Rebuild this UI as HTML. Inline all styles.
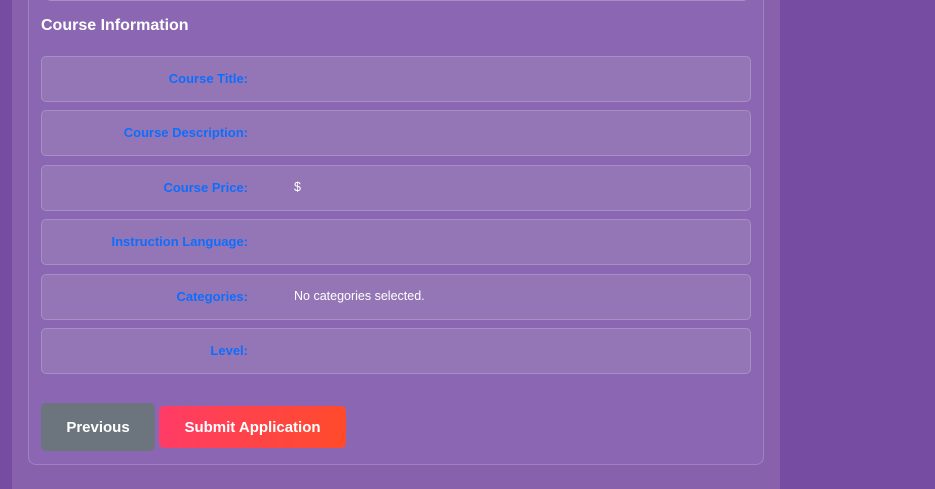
<!DOCTYPE html>
<html><head><style>
*{box-sizing:border-box;margin:0;padding:0}
html,body{width:935px;height:489px;overflow:hidden;background:#764ca2;font-family:"Liberation Sans",sans-serif}
.outer{position:absolute;left:12px;top:0;width:768px;height:489px;background:#8861ac}
.card{position:absolute;left:28px;top:-20px;width:736px;height:485px;background:#8b66b2;border:1px solid rgba(255,255,255,0.18);border-radius:8px}
.topbox{position:absolute;left:45px;top:-40px;width:704px;height:41px;border:1px solid rgba(255,255,255,0.2);border-radius:6px;background:#9274b6}
h3{position:absolute;left:41px;top:17px;color:#fff;font-size:16px;font-weight:bold}
.row{position:absolute;left:41px;width:710px;height:46px;background:#9476b6;border:1px solid rgba(255,255,255,0.18);border-radius:5px;font-size:13px}
.row .l{position:absolute;right:502px;top:14px;color:#0d6efd;font-weight:bold}
.row .v{position:absolute;left:252px;top:14px;color:#fff;font-size:12.5px}
.btn{position:absolute;color:#fff;font-weight:bold;font-size:15px;display:flex;align-items:center;justify-content:center;border-radius:5px}
</style></head><body>
<div class="outer"></div>
<div class="card"></div>
<div class="topbox"></div>
<h3>Course Information</h3>
<div class="row" style="top:56px"><span class="l">Course Title:</span></div>
<div class="row" style="top:110px"><span class="l">Course Description:</span></div>
<div class="row" style="top:165px"><span class="l">Course Price:</span><span class="v">$</span></div>
<div class="row" style="top:219px"><span class="l">Instruction Language:</span></div>
<div class="row" style="top:274px"><span class="l">Categories:</span><span class="v">No categories selected.</span></div>
<div class="row" style="top:328px"><span class="l">Level:</span></div>
<div class="btn" style="left:41px;top:403px;width:114px;height:48px;background:#6c757d">Previous</div>
<div class="btn" style="left:159px;top:406px;width:187px;height:42px;background:linear-gradient(90deg,#ff3c67,#ff4b2b)">Submit Application</div>
</body></html>
